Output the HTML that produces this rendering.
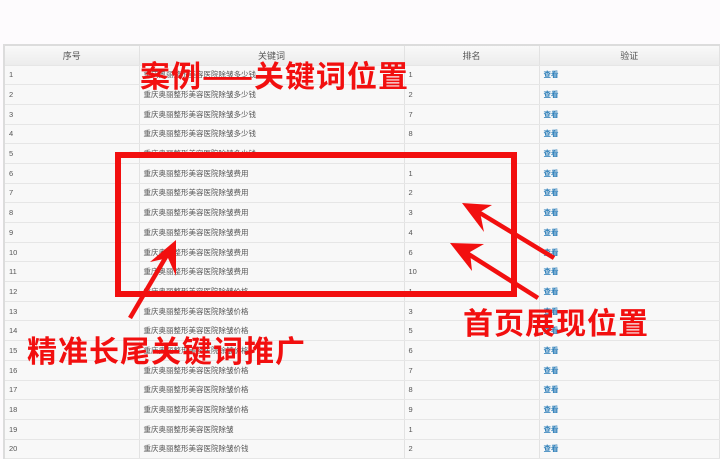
<!DOCTYPE html>
<html><head><meta charset="utf-8"><style>
body{margin:0;width:720px;height:450px;overflow:hidden;background:#fdfbfd;font-family:"Liberation Sans","Noto Sans CJK SC",sans-serif;position:relative}
table{position:absolute;left:3px;top:44px;width:717px;border-collapse:collapse;border-top:2px solid #dcdcdc;border-left:2px solid #dcdcdc;background:#f8f8f8}
td,th{height:19.7px;padding:0 0 0 4px;border-bottom:1px solid #e6e6e6;border-right:1px solid #e2e2e2;font-size:7.5px;color:#555;font-weight:normal;box-sizing:border-box;font-family:"Liberation Sans","Noto Sans CJK SC",sans-serif}
th{height:20px;background:linear-gradient(#f9f9f9,#ececec);text-align:center;font-size:9px;color:#555;padding:0}
td a{color:#2a7db8;font-weight:bold}
.r{position:absolute;color:#f20f0f;font-weight:bold;white-space:nowrap;font-family:"Noto Sans CJK SC",sans-serif;line-height:1;font-size:30px;letter-spacing:1px}
</style></head><body>
<table>
<tr><th style="width:135px">序号</th><th style="width:265px">关键词</th><th style="width:135px">排名</th><th>验证</th></tr>
<tr><td>1</td><td>重庆奥丽整形美容医院除皱多少钱</td><td>1</td><td><a>查看</a></td></tr>
<tr><td>2</td><td>重庆奥丽整形美容医院除皱多少钱</td><td>2</td><td><a>查看</a></td></tr>
<tr><td>3</td><td>重庆奥丽整形美容医院除皱多少钱</td><td>7</td><td><a>查看</a></td></tr>
<tr><td>4</td><td>重庆奥丽整形美容医院除皱多少钱</td><td>8</td><td><a>查看</a></td></tr>
<tr><td>5</td><td>重庆奥丽整形美容医院除皱多少钱</td><td></td><td><a>查看</a></td></tr>
<tr><td>6</td><td>重庆奥丽整形美容医院除皱费用</td><td>1</td><td><a>查看</a></td></tr>
<tr><td>7</td><td>重庆奥丽整形美容医院除皱费用</td><td>2</td><td><a>查看</a></td></tr>
<tr><td>8</td><td>重庆奥丽整形美容医院除皱费用</td><td>3</td><td><a>查看</a></td></tr>
<tr><td>9</td><td>重庆奥丽整形美容医院除皱费用</td><td>4</td><td><a>查看</a></td></tr>
<tr><td>10</td><td>重庆奥丽整形美容医院除皱费用</td><td>6</td><td><a>查看</a></td></tr>
<tr><td>11</td><td>重庆奥丽整形美容医院除皱费用</td><td>10</td><td><a>查看</a></td></tr>
<tr><td>12</td><td>重庆奥丽整形美容医院除皱价格</td><td>1</td><td><a>查看</a></td></tr>
<tr><td>13</td><td>重庆奥丽整形美容医院除皱价格</td><td>3</td><td><a>查看</a></td></tr>
<tr><td>14</td><td>重庆奥丽整形美容医院除皱价格</td><td>5</td><td><a>查看</a></td></tr>
<tr><td>15</td><td>重庆奥丽整形美容医院除皱价格</td><td>6</td><td><a>查看</a></td></tr>
<tr><td>16</td><td>重庆奥丽整形美容医院除皱价格</td><td>7</td><td><a>查看</a></td></tr>
<tr><td>17</td><td>重庆奥丽整形美容医院除皱价格</td><td>8</td><td><a>查看</a></td></tr>
<tr><td>18</td><td>重庆奥丽整形美容医院除皱价格</td><td>9</td><td><a>查看</a></td></tr>
<tr><td>19</td><td>重庆奥丽整形美容医院除皱</td><td>1</td><td><a>查看</a></td></tr>
<tr><td>20</td><td>重庆奥丽整形美容医院除皱价钱</td><td>2</td><td><a>查看</a></td></tr>
</table>
<svg style="position:absolute;left:0;top:0" width="720" height="450">
<rect x="118" y="155" width="396" height="139" fill="none" stroke="#f20f0f" stroke-width="6"/>
<g stroke="#f20f0f" stroke-width="4.5" fill="#f20f0f">
<line x1="130" y1="318" x2="170" y2="250"/>
<line x1="554" y1="258" x2="475" y2="210"/>
<line x1="538" y1="298" x2="462" y2="250"/>
</g>
<g fill="#f20f0f">
<polygon points="176,240 150,262 168,258 176,276"/>
<polygon points="462,203 492,205 480,212 484,232"/>
<polygon points="450,243 484,244 470,252 472,271"/>
</g>
</svg>
<div class="r" style="left:140px;top:59px">案例——关键词位置</div>
<div class="r" style="left:27px;top:334px">精准长尾关键词推广</div>
<div class="r" style="left:463px;top:306px">首页展现位置</div>
</body></html>
